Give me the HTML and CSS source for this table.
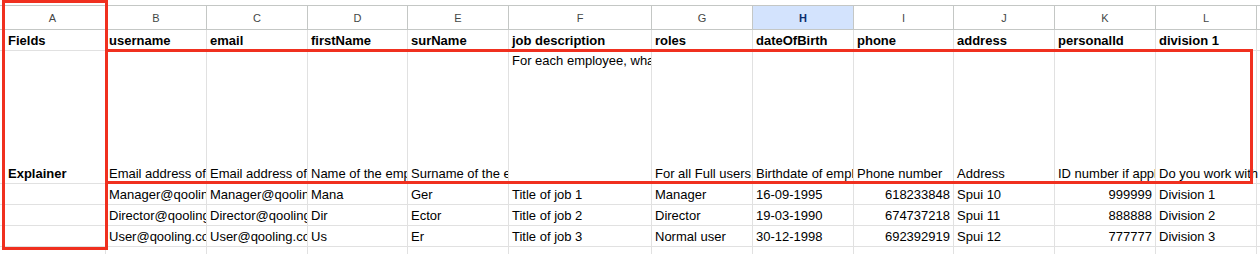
FILE: index.html
```html
<!DOCTYPE html>
<html>
<head>
<meta charset="utf-8">
<link rel="stylesheet" href="styles.css">
</head>
<body>
<div class="frame">
  <div class="sheet">
    <div class="ch">A</div><div class="ch">B</div><div class="ch">C</div><div class="ch">D</div><div class="ch">E</div><div class="ch">F</div><div class="ch">G</div><div class="ch ch-sel">H</div><div class="ch">I</div><div class="ch">J</div><div class="ch">K</div><div class="ch">L</div><div class="ch"></div>

    <div class="c b first">Fields</div><div class="c b">username</div><div class="c b">email</div><div class="c b">firstName</div><div class="c b">surName</div><div class="c b">job description</div><div class="c b">roles</div><div class="c b">dateOfBirth</div><div class="c b">phone</div><div class="c b">address</div><div class="c b">personalId</div><div class="c b">division 1</div><div class="c"></div>

    <div class="c b first">Explainer</div><div class="c">Email address of the employee</div><div class="c">Email address of the employee</div><div class="c">Name of the employee</div><div class="c">Surname of the employee</div><div class="c top">For each employee, what is the job description</div><div class="c">For all Full users, the role</div><div class="c">Birthdate of employee</div><div class="c">Phone number</div><div class="c">Address</div><div class="c">ID number if applicable</div><div class="c spill">Do you work with divisions?</div><div class="c"></div>

    <div class="c first"></div><div class="c">Manager@qooling.com</div><div class="c">Manager@qooling.com</div><div class="c">Mana</div><div class="c">Ger</div><div class="c">Title of job 1</div><div class="c">Manager</div><div class="c">16-09-1995</div><div class="c num">618233848</div><div class="c">Spui 10</div><div class="c num">999999</div><div class="c">Division 1</div><div class="c"></div>

    <div class="c first"></div><div class="c">Director@qooling.com</div><div class="c">Director@qooling.com</div><div class="c">Dir</div><div class="c">Ector</div><div class="c">Title of job 2</div><div class="c">Director</div><div class="c">19-03-1990</div><div class="c num">674737218</div><div class="c">Spui 11</div><div class="c num">888888</div><div class="c">Division 2</div><div class="c"></div>

    <div class="c first"></div><div class="c">User@qooling.com</div><div class="c">User@qooling.com</div><div class="c">Us</div><div class="c">Er</div><div class="c">Title of job 3</div><div class="c">Normal user</div><div class="c">30-12-1998</div><div class="c num">692392919</div><div class="c">Spui 12</div><div class="c num">777777</div><div class="c">Division 3</div><div class="c"></div>

    <div class="c first"></div><div class="c"></div><div class="c"></div><div class="c"></div><div class="c"></div><div class="c"></div><div class="c"></div><div class="c"></div><div class="c"></div><div class="c"></div><div class="c"></div><div class="c"></div><div class="c"></div>
  </div>
  <div class="mark mark-col"></div>
  <div class="mark mark-row"></div>
</div>
</body>
</html>
```
FILE: styles.css
```css
html, body {
  margin: 0;
  padding: 0;
  background: #fff;
  overflow: hidden;
}
body {
  width: 1260px;
  height: 254px;
}
.frame {
  position: relative;
  padding-top: 5px;
  width: 1260px;
  height: 249px;
  overflow: hidden;
}
.sheet {
  display: grid;
  grid-template-columns: 106px 101px 101px 100px 101px 143px 101px 101px 100px 101px 101px 101px 200px;
  grid-template-rows: 25px 21px 133px 21px 21px 21px 21px;
  width: 1357px;
  font-family: "Liberation Sans", Arial, sans-serif;
  font-size: 13px;
  color: #000;
}
.ch {
  box-sizing: border-box;
  border-top: 1px solid #c4c7c5;
  border-bottom: 1px solid #c4c7c5;
  border-right: 1px solid #c4c7c5;
  display: flex;
  align-items: center;
  justify-content: center;
  font-size: 11px;
  color: #444746;
  padding-top: 1px;
}
.ch-sel {
  background: #d3e3fd;
  color: #0b2e6e;
  font-weight: bold;
}
.c {
  box-sizing: border-box;
  border-right: 1px solid #e1e1e1;
  border-bottom: 1px solid #e1e1e1;
  display: flex;
  align-items: flex-end;
  padding: 0 3px 2px 3px;
  white-space: nowrap;
  overflow: hidden;
  line-height: 15px;
}
.first {
  padding-left: 8px;
}
.b {
  font-weight: bold;
}
.top {
  align-items: flex-start;
  padding-top: 2px;
}
.num {
  justify-content: flex-end;
}
.spill {
  overflow: visible;
}
.mark {
  position: absolute;
  box-sizing: border-box;
  border: 3px solid #f0301f;
  pointer-events: none;
}
.mark-col {
  left: 2px;
  top: 0;
  width: 106px;
  height: 250px;
}
.mark-row {
  left: 105px;
  top: 49px;
  width: 1148px;
  height: 135px;
}
```
